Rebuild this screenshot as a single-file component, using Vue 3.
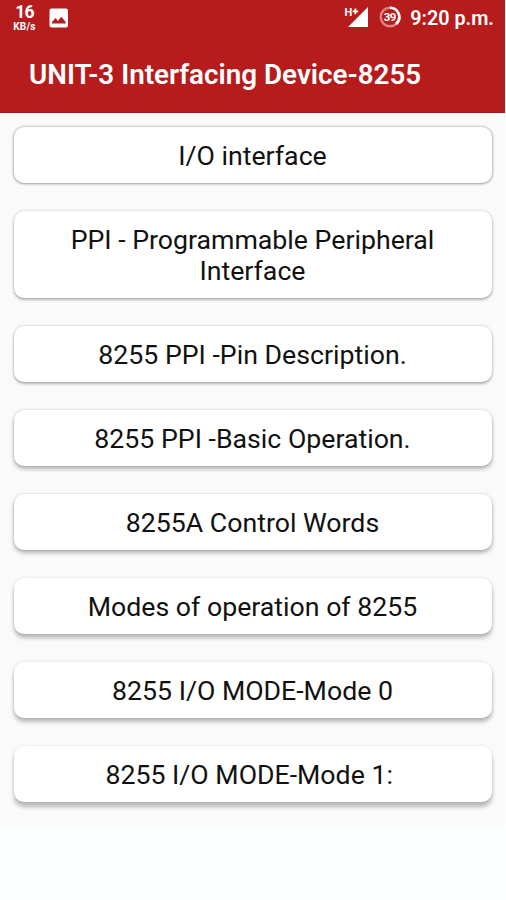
<script setup>
const topics = [
  { text: 'I/O interface', depth: 1 },
  { text: 'PPI - Programmable Peripheral Interface', depth: 2, tall: true },
  { text: '8255 PPI -Pin Description.', depth: 2 },
  { text: '8255 PPI -Basic Operation.', depth: 3 },
  { text: '8255A Control Words', depth: 3 },
  { text: 'Modes of operation of 8255', depth: 4 },
  { text: '8255 I/O MODE-Mode 0', depth: 4 },
  { text: '8255 I/O MODE-Mode 1: ', depth: 5 },
]
</script>

<template>
  <div class="screen">
    <header class="header">
      <div class="status">
        <div class="speed"><span class="rate">16</span><span class="unit">KB/s</span></div>
        <svg class="picture" width="20" height="20" viewBox="0 0 20 20">
          <rect x="0.5" y="0.5" width="18.5" height="19" rx="2.2" fill="#fff" />
          <path d="M3 15.5V14l3.5-4 2.4 3 3.4-4.3 4.4 5.3v1.5z" fill="#b71c1c" />
        </svg>
        <div class="spacer"></div>
        <svg class="signal" width="26" height="24" viewBox="0 0 26 24">
          <path d="M24 3V23H4z" fill="#fff" />
          <text x="0.6" y="12" font-size="11" font-weight="700" fill="#fff">H</text>
          <path d="M8.6 7.4h5.6M11.4 4.6v5.6" stroke="#fff" stroke-width="1.8" />
        </svg>
        <svg class="battery" width="22" height="22" viewBox="0 0 22 22">
          <circle cx="11" cy="11" r="9.3" fill="none" stroke="#dc8585" stroke-width="2.4" />
          <path d="M11 1.7a9.3 9.3 0 0 1 6 16.4" fill="none" stroke="#fff" stroke-width="2.6" />
          <text x="10.8" y="15" font-size="11.5" font-weight="700" text-anchor="middle" letter-spacing="-0.5" fill="#fff">39</text>
        </svg>
        <span class="clock">9:20 p.m.</span>
      </div>
      <h1 class="title">UNIT-3 Interfacing Device-8255</h1>
    </header>
    <main class="list">
      <button
        v-for="topic in topics"
        :key="topic.text"
        class="card"
        :class="['depth-' + topic.depth, { tall: topic.tall }]"
      ><span class="label">{{ topic.text }}</span></button>
    </main>
  </div>
</template>

<style>
body {
  margin: 0;
  background: #fbffff;
}
</style>

<style scoped>
.screen {
  width: 506px;
  height: 900px;
  overflow: hidden;
  background: #fbffff;
  font-family: Roboto, "Liberation Sans", sans-serif;
}
.header {
  box-sizing: border-box;
  width: 505px;
  height: 113px;
  background: #b71c1c;
  border-bottom: 1px solid #aa1515;
  color: #fff;
}
.status {
  display: flex;
  align-items: flex-start;
  height: 37px;
  padding: 0 11px 0 12px;
}
.speed {
  display: flex;
  flex-direction: column;
  align-items: center;
  width: 25px;
  padding-top: 2px;
  font-weight: 700;
}
.rate {
  font-size: 17.5px;
  line-height: 21px;
  letter-spacing: -0.8px;
}
.unit {
  font-size: 10px;
  line-height: 11px;
  letter-spacing: 0.2px;
  margin-top: -2px;
}
.picture {
  margin: 8px 0 0 12px;
}
.spacer {
  flex: 1;
}
.signal {
  margin-top: 4px;
}
.battery {
  margin: 6px 0 0 9px;
}
.clock {
  margin-left: 9px;
  padding-top: 6px;
  font-size: 19.8px;
  line-height: 25px;
  font-weight: 600;
}
.title {
  margin: 0;
  padding-left: 29px;
  font-size: 27.8px;
  line-height: 76px;
  font-weight: 600;
  white-space: nowrap;
}
.list {
  display: flex;
  flex-direction: column;
  gap: 28px;
  box-sizing: border-box;
  width: 505px;
  height: 715px;
  padding: 14px 13.5px 0 13.5px;
  background: #fafafa;
}
.card {
  display: flex;
  flex: none;
  align-items: center;
  justify-content: center;
  box-sizing: border-box;
  height: 56px;
  padding: 3px 40px 0;
  border: 0;
  border-radius: 10px;
  background: #fff;
  color: #111;
  font-family: inherit;
  font-size: 26.7px;
  line-height: 31px;
  text-align: center;
}
.label {
  white-space: pre;
}
.tall {
  height: 87px;
}
.tall .label {
  white-space: normal;
}
.depth-1 {
  box-shadow: 0 0 3px rgba(0, 0, 0, 0.36), 0 1px 3px rgba(0, 0, 0, 0.24);
}
.depth-2 {
  box-shadow: 0 0 3px rgba(0, 0, 0, 0.2), 0 2px 3px rgba(0, 0, 0, 0.26);
}
.depth-3 {
  box-shadow: 0 0 3px rgba(0, 0, 0, 0.16), 0 3px 4px rgba(0, 0, 0, 0.28);
}
.depth-4 {
  box-shadow: 0 0 3px rgba(0, 0, 0, 0.12), 0 4px 4px rgba(0, 0, 0, 0.26);
}
.depth-5 {
  box-shadow: 0 0 3px rgba(0, 0, 0, 0.1), 0 5px 4px rgba(0, 0, 0, 0.25);
}
</style>
